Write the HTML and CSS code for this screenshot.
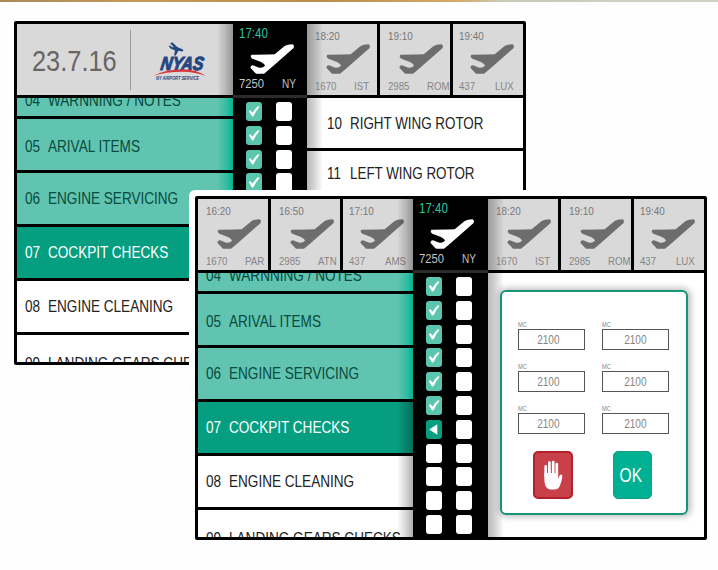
FILE: index.html
```html
<!DOCTYPE html>
<html lang="en">
<head>
<meta charset="utf-8">
<title>NYAS ground checks</title>
<link rel="stylesheet" href="styles.css">
</head>
<body>
<svg class="defs" width="0" height="0">
  <symbol id="plane" viewBox="0 0 132 90"><path d="M5 32Q30 32 74 31L104 6Q112 1 127 1Q135 4 130 13L60 74L42 89L18 89L1 71Q2 64 9 64L28 71Q42 72 45 64Q43 59 33 54L7 44Q-2 37 5 32Z"/></symbol>
  <symbol id="tick" viewBox="0 0 17 19"><path d="M3 9.3L4.6 8L7 10.8Q9.6 6.3 13 3.6L14.2 4.6Q10.4 9 8 14.6L6.4 14.8Z"/></symbol>
</svg>
<div class="strip"></div>
<main class="canvas">

<section class="window back">
  <header class="top">
    <div class="brand edge-right">
      <div class="date"><span>23.7.16</span></div>
      <div class="logo">
        <svg width="54" height="42" viewBox="0 0 54 42">
          <path fill="#24477f" d="M16 2L18.6 1.6L23.2 6L28.4 8.2Q30.4 9.6 28.4 10.4L24.4 9.8L21.8 14.4L20 14.4L21 9.4L16 7.2L14.8 4.8L16 4.6L17.8 6L19.8 6.2Z"/>
          <text class="logo-name" x="10" y="29" textLength="43" lengthAdjust="spacingAndGlyphs" transform="skewX(-8)">NYAS</text>
          <path fill="#d5363e" d="M0 34.6Q14 27.6 32 28.4Q44 29.2 52 35Q42 31 28 30.8Q12 30.8 0 34.6Z"/>
          <text class="logo-sub" x="2" y="39.4" textLength="43" lengthAdjust="spacingAndGlyphs">NY AIRPORT SERVICE</text>
        </svg>
      </div>
    </div>
    <div class="flight now"><time>17:40</time><svg class="plane"><use href="#plane"/></svg><div class="codes"><span>7250</span><span>NY</span></div></div>
    <div class="flights edge-left">
      <div class="flight"><time>18:20</time><svg class="plane"><use href="#plane"/></svg><div class="codes"><span>1670</span><span>IST</span></div></div>
      <div class="flight"><time>19:10</time><svg class="plane"><use href="#plane"/></svg><div class="codes"><span>2985</span><span>ROM</span></div></div>
      <div class="flight tight"><time>19:40</time><svg class="plane"><use href="#plane"/></svg><div class="codes"><span>437</span><span>LUX</span></div></div>
    </div>
  </header>
  <div class="body">
    <ul class="tasks edge-right">
      <li class="done first"><b>04</b><span>WARNNING / NOTES</span></li>
      <li class="done low"><b>05</b><span>ARIVAL ITEMS</span></li>
      <li class="done"><b>06</b><span>ENGINE SERVICING</span></li>
      <li class="active"><b>07</b><span>COCKPIT CHECKS</span></li>
      <li><b>08</b><span>ENGINE CLEANING</span></li>
      <li class="last"><b>09</b><span>LANDING GEARS CHECKS</span></li>
    </ul>
    <div class="checks">
      <i class="on"><svg><use href="#tick"/></svg></i><i></i>
      <i class="on"><svg><use href="#tick"/></svg></i><i></i>
      <i class="on"><svg><use href="#tick"/></svg></i><i></i>
      <i class="on"><svg><use href="#tick"/></svg></i><i></i>
      <i class="on"><svg><use href="#tick"/></svg></i><i></i>
    </div>
    <ul class="tasks second edge-left">
      <li><b>10</b><span>RIGHT WING ROTOR</span></li>
      <li><b>11</b><span>LEFT WING ROTOR</span></li>
    </ul>
  </div>
</section>

<section class="window front">
  <header class="top">
    <div class="flights edge-right">
      <div class="flight"><time>16:20</time><svg class="plane"><use href="#plane"/></svg><div class="codes"><span>1670</span><span>PAR</span></div></div>
      <div class="flight"><time>16:50</time><svg class="plane"><use href="#plane"/></svg><div class="codes"><span>2985</span><span>ATN</span></div></div>
      <div class="flight tight"><time>17:10</time><svg class="plane"><use href="#plane"/></svg><div class="codes"><span>437</span><span>AMS</span></div></div>
    </div>
    <div class="flight now"><time>17:40</time><svg class="plane"><use href="#plane"/></svg><div class="codes"><span>7250</span><span>NY</span></div></div>
    <div class="flights edge-left">
      <div class="flight"><time>18:20</time><svg class="plane"><use href="#plane"/></svg><div class="codes"><span>1670</span><span>IST</span></div></div>
      <div class="flight"><time>19:10</time><svg class="plane"><use href="#plane"/></svg><div class="codes"><span>2985</span><span>ROM</span></div></div>
      <div class="flight tight"><time>19:40</time><svg class="plane"><use href="#plane"/></svg><div class="codes"><span>437</span><span>LUX</span></div></div>
    </div>
  </header>
  <div class="body">
    <ul class="tasks edge-right">
      <li class="done first"><b>04</b><span>WARNNING / NOTES</span></li>
      <li class="done low"><b>05</b><span>ARIVAL ITEMS</span></li>
      <li class="done"><b>06</b><span>ENGINE SERVICING</span></li>
      <li class="active"><b>07</b><span>COCKPIT CHECKS</span></li>
      <li><b>08</b><span>ENGINE CLEANING</span></li>
      <li class="last"><b>09</b><span>LANDING GEARS CHECKS</span></li>
    </ul>
    <div class="checks">
      <i class="on"><svg><use href="#tick"/></svg></i><i></i>
      <i class="on"><svg><use href="#tick"/></svg></i><i></i>
      <i class="on"><svg><use href="#tick"/></svg></i><i></i>
      <i class="on"><svg><use href="#tick"/></svg></i><i></i>
      <i class="on"><svg><use href="#tick"/></svg></i><i></i>
      <i class="on"><svg><use href="#tick"/></svg></i><i></i>
      <i class="current"><svg viewBox="0 0 17 19"><path d="M3.4 9.5L12 4V15Z"/></svg></i><i></i>
      <i></i><i></i>
      <i></i><i></i>
      <i></i><i></i>
      <i></i><i></i>
    </div>
    <div class="detail edge-left">
      <form class="panel">
        <div class="fields">
          <label><small>MC</small><output><span>2100</span></output></label>
          <label><small>MC</small><output><span>2100</span></output></label>
          <label><small>MC</small><output><span>2100</span></output></label>
          <label><small>MC</small><output><span>2100</span></output></label>
          <label><small>MC</small><output><span>2100</span></output></label>
          <label><small>MC</small><output><span>2100</span></output></label>
        </div>
        <div class="actions">
          <button type="button" class="stop" aria-label="Stop"><svg width="20" height="30" viewBox="0 0 20 30"><path fill="none" stroke="#fff" stroke-width="2.7" stroke-linecap="round" d="M2.7 15V6.4M6.4 14V2.6M10.2 14V2M13.8 14V4"/><path fill="#fff" d="M1.3 13H15.2V19Q16.4 15 18 14.6Q19.6 14.6 19.3 16.6Q18.8 21 17.2 25Q15.6 29.5 11.6 29.5H8Q4 29.5 2.4 25.6Q1.3 22.6 1.3 19Z"/></svg></button>
          <button type="button" class="ok"><span>OK</span></button>
        </div>
      </form>
    </div>
  </div>
</section>

</main>
</body>
</html>
```
FILE: styles.css
```css
* { box-sizing: border-box; }

body {
  margin: 0;
  height: 570px;
  overflow: hidden;
  background: #fefefe;
  font-family: "Liberation Sans", Arial, sans-serif;
}

.defs { position: absolute; }

.strip {
  height: 2px;
  background: linear-gradient(90deg, #a98a5b, #c39a58 20%, #b98d4c 45%, #d3ab6a 64%, #c9cbb8 70%, #cfd2c6);
}

/* Two overlapping windows */
.window {
  position: absolute;
  isolation: isolate;
  width: 512px;
  height: 344px;
  border: 3px solid #000;
  border-radius: 2px;
  background: #fff;
  display: flex;
  flex-direction: column;
}
.back { left: 14px; top: 21px; --left: 216px; --mid: 74px; }
.front { left: 195px; top: 196px; --left: 215px; --mid: 75px; box-shadow: 0 0 0 6px #fff; }

.top, .body {
  display: grid;
  grid-template-columns: var(--left) var(--mid) 216px;
}
.top { height: 74px; grid-template-rows: 71px; border-bottom: 3px solid #000; background: #000; }
.body { flex: 1; min-height: 0; grid-template-rows: 100%; }

/* Soft shade where columns pass under the black centre strip */
.edge-left, .edge-right { position: relative; }
.edge-left::before, .edge-right::after {
  content: "";
  position: absolute;
  top: 0;
  bottom: 0;
  width: 16px;
  pointer-events: none;
}
.edge-left::before { left: 0; background: linear-gradient(90deg, rgba(0,0,0,.28), rgba(0,0,0,.18) 40%, transparent); }
.edge-right::after { right: 0; background: linear-gradient(270deg, rgba(0,0,0,.32), rgba(0,0,0,.16) 45%, transparent); }

/* Brand block */
.brand { display: flex; align-items: center; background: #d9d9d9; }
.date {
  width: 114px;
  height: 60px;
  padding-left: 15px;
  border-right: 1px solid #999;
  font-size: 29.5px;
  line-height: 62px;
  color: #666;
}
.date span { display: inline-block; transform: scaleX(.86); transform-origin: left; }
.logo { padding-left: 23px; height: 42px; margin-top: 4px; }
.logo svg { display: block; overflow: visible; }
.logo-name {
  font: italic 900 19px "Liberation Sans", sans-serif;
  fill: #24477f;
  stroke: #24477f;
  stroke-width: 1.1px;
}
.logo-sub { font: italic bold 5px "Liberation Sans", sans-serif; fill: #24477f; }

/* Flight cells */
.flights { display: grid; grid-template-columns: repeat(3, 1fr); gap: 3px; }
.flight {
  --x: 8px;
  --second: 39px;
  padding: 6px 0 0 var(--x);
  background: #d9d9d9;
  color: #858585;
  font-size: 11.5px;
  line-height: 12px;
  overflow: hidden;
}
.flight.tight { --x: 6px; --second: 36px; }
.flight time { display: block; color: #777; transform: scaleX(.86); transform-origin: left; }
.plane { display: block; width: 44px; height: 30px; margin: 2px 0 6px 11px; fill: #6d6d6d; }
.codes { display: grid; grid-template-columns: var(--second) 1fr; }
.codes span { width: max-content; transform: scaleX(.84); transform-origin: left; white-space: nowrap; }
.now { --x: 6px; --second: 43px; padding-top: 1px; background: #000; color: #c4c4c4; font-size: 12.5px; height: 74px; border-bottom: 3px solid #2c2a2a; }
.now time { font-size: 15px; line-height: 15px; color: #2cc4a0; transform: scaleX(.77); }
.now .plane { fill: #fff; margin: 4px 0 4px 11px; }
.now .codes span { transform: scaleX(.9); }
.now .codes span + span { transform: scaleX(.8); }

/* Task list */
.tasks { list-style: none; margin: 0; padding: 0; overflow: hidden; }
.tasks li {
  display: grid;
  grid-template-columns: 23px 1fr;
  height: 54px;
  padding-left: 8px;
  border-bottom: 3px solid #000;
  font-size: 17.3px;
  line-height: 51px;
  color: #222;
  overflow: hidden;
}
.tasks b, .tasks span {
  font-weight: normal;
  white-space: nowrap;
  transform: scaleX(.785);
  transform-origin: left;
  width: max-content;
}
.tasks .done { background: linear-gradient(270deg, #00b493, #2fbda0 6px, #61c4b0 16px); color: #074b3e; }
.tasks .low { line-height: 54px; }
.tasks .first { height: 21px; line-height: 5px; }
.tasks .active { background: #069e80; color: #fff; }
.tasks .last { height: auto; line-height: 57px; border: 0; }
.tasks .done { position: relative; z-index: 1; }
.second li { padding-left: 20px; height: 53px; line-height: 51px; }
.second li + li { height: 180px; line-height: 44px; border: 0; }
.second b, .second span { transform: scaleX(.775); }

/* Check columns */
.checks {
  display: grid;
  grid-template-columns: 16px 16px;
  grid-auto-rows: 19px;
  gap: 4.8px 14px;
  align-content: start;
  justify-content: center;
  padding-top: 4px;
  padding-right: 3px;
  background: #000;
  overflow: hidden;
}
.checks i { background: #fff; border-radius: 3px; }
.checks svg { display: block; width: 16px; height: 19px; fill: #fff; }
.checks .on { background: #5cc5ae; }
.checks .current { background: #069e80; }

/* Entry panel */
.detail { padding: 17px 0 0 12px; }
.panel {
  position: relative;
  width: 188px;
  height: 225px;
  padding: 29px 17px 0 16px;
  border: 2px solid #17957a;
  border-radius: 6px;
  background: #fff;
  box-shadow: 1px 0 6px 2px rgba(0,0,0,.25);
}
.fields { display: grid; grid-template-columns: 67px 67px; gap: 0 17px; }
.fields label { display: block; height: 42px; color: #858585; }
.fields small { display: block; font-size: 7.5px; line-height: 8px; transform: scaleX(.76); transform-origin: left; }
.fields output {
  display: block;
  height: 21px;
  border: 1px solid #555;
  font-size: 12px;
  line-height: 20px;
  text-align: center;
  padding-right: 7px;
}
.fields output span { display: inline-block; transform: scaleX(.84); }
.fields label:nth-child(even) output { padding-right: 1px; }
.actions { display: flex; gap: 40px; padding-left: 15px; margin-top: 4px; }
.actions button {
  display: flex;
  align-items: center;
  justify-content: center;
  width: 40px;
  height: 48px;
  padding: 0;
  border-radius: 5px;
  font: 20.5px "Liberation Sans", Arial, sans-serif;
  color: #fff;
}
.stop { background: #c8404a; border: 2px solid #b5202b; }
.actions .ok { width: 39px; background: #00b093; border: 1px solid #12a084; }
.ok span { transform: scaleX(.76); margin-left: -4px; }
```
